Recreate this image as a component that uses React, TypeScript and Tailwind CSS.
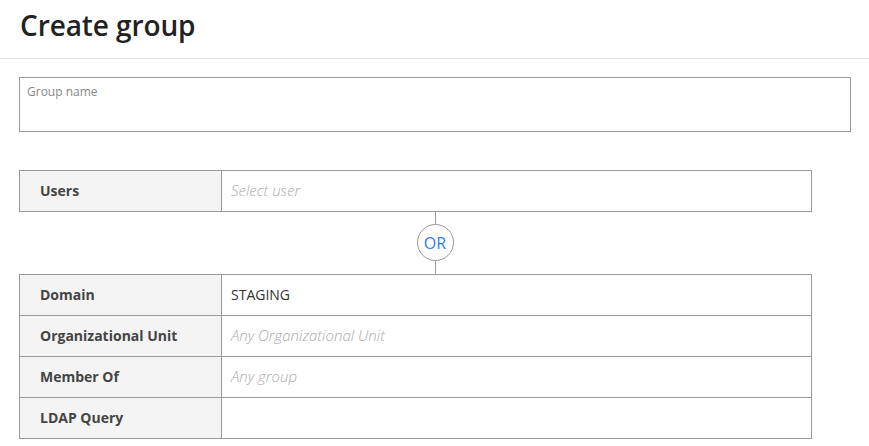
import React from "react";

const font = { fontFamily: '"Open Sans", "Noto Sans", sans-serif' };

function Row({ label, value, placeholder }: { label: string; value?: string; placeholder?: string }) {
  return (
    <div className="flex h-[41px] border-b border-[#999]">
      <div className="w-[202px] shrink-0 bg-[#f4f4f4] border-r border-[#999] flex items-center pl-[20px] pb-[2px] text-[14px] font-bold text-[#444]">
        {label}
      </div>
      <div className="flex-1 flex items-center pl-[9px] pb-[2px] text-[14px]">
        {value ? (
          <span className="text-[#333]">{value}</span>
        ) : placeholder ? (
          <span className="italic font-light text-[15px] text-[#aaa]">{placeholder}</span>
        ) : null}
      </div>
    </div>
  );
}

export default function App() {
  return (
    <div className="w-[869px] h-[446px] bg-white overflow-hidden" style={font}>
      <div className="h-[59px] border-b border-[#e3e3e3] pl-[20px] pt-[4px]">
        <h1 className="text-[28px] font-semibold text-[#222] tracking-[-0.1px]">Create group</h1>
      </div>
      <div className="pl-[19px] pr-[18px] pt-[18px]">
        <div className="h-[55px] border border-[#999] px-[7px] pt-[5px]">
          <div className="text-[12px] text-[#888]">Group name</div>
        </div>
        <div className="mt-[38px] w-[793px] border-x border-t border-[#999]">
          <Row label="Users" placeholder="Select user" />
        </div>
        <div className="flex flex-col items-center">
          <div className="w-px h-[12px] bg-[#999]" />
          <div className="w-[37px] h-[37px] rounded-full border border-[#999] flex items-center justify-center text-[16px] text-[#2b7de9]">
            OR
          </div>
          <div className="w-px h-[13px] bg-[#999]" />
        </div>
        <div className="w-[793px] border-x border-t border-[#999]">
          <Row label="Domain" value="STAGING" />
          <Row label="Organizational Unit" placeholder="Any Organizational Unit" />
          <Row label="Member Of" placeholder="Any group" />
          <Row label="LDAP Query" />
        </div>
      </div>
    </div>
  );
}
